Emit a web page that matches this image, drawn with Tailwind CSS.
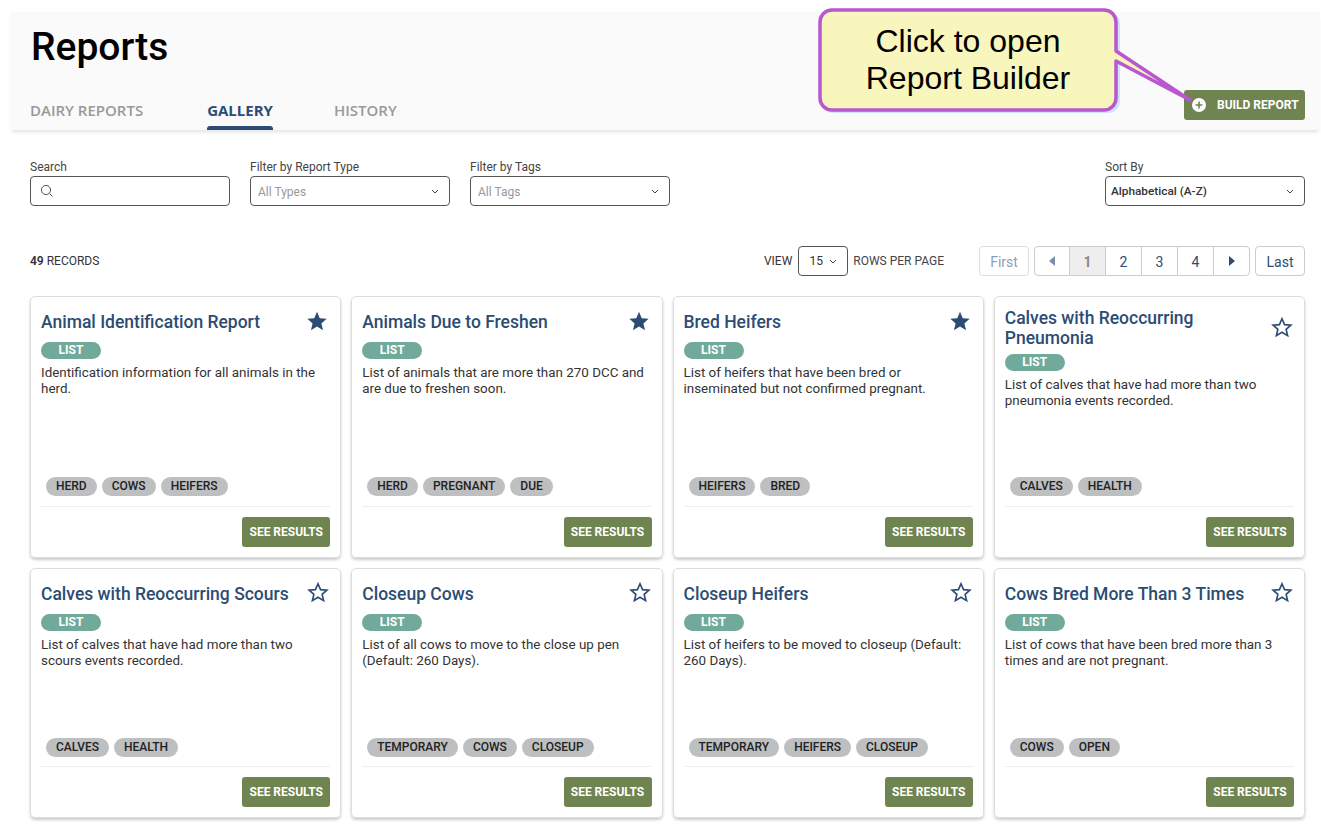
<!DOCTYPE html>
<html lang="en"><head><meta charset="utf-8"><title>Reports</title>
<script src="https://cdn.jsdelivr.net/npm/@tailwindcss/browser@4"></script></head>
<body class="bg-white font-['Roboto',sans-serif] text-[#333] relative overflow-hidden h-[828px]">
<header class="ml-[10px] mr-[1px] mt-[12px] h-[118px] bg-[#fafafa] shadow-[0_4px_4px_-2px_rgba(0,0,0,0.12)] flex flex-col justify-between relative">
  <h1 class="ml-[21px] mt-[12px] text-[39px] leading-[46px] font-medium text-black">Reports</h1>
  <div class="flex justify-between items-end pl-[20px] pr-[15px]">
    <nav class="flex font-['Open_Sans',sans-serif] font-semibold text-[15px] leading-[20px]">
      <span class="text-[#999] h-[30px]">DAIRY REPORTS</span>
      <span class="ml-[64px] text-[#2c4c74] h-[30px] font-bold flex flex-col justify-between">GALLERY<i class="block h-[4px] bg-[#2c4c74] rounded-t-[3px]"></i></span>
      <span class="ml-[61px] text-[#999] h-[30px]">HISTORY</span>
    </nav>
    <button class="mb-[10px] w-[121px] h-[30px] rounded-[3px] bg-[#6f8450] text-white text-[12px] font-bold flex items-center pl-[8px] gap-[11px]">
      <svg class="w-[14px] h-[14px]" viewBox="0 0 14 14"><circle cx="7" cy="7" r="7" fill="#fff"/><path d="M7 3.500v7M3.500 7h7" stroke="#6f8450" stroke-width="1.600"/></svg>BUILD REPORT</button>
  </div>
</header>
<section class="pl-[30px] pr-[16px] pt-[30px] flex justify-between">
  <div class="flex gap-[20px]">
    <label class="block w-[200px] text-[12px] leading-[14px] text-[#444]">Search
      <span class="mt-[2px] h-[30px] border border-[#555] rounded-[4px] flex items-center pl-[9px]"><svg class="w-[14px] h-[14px]" viewBox="0 0 14 14" fill="none" stroke="#555"><circle cx="6" cy="6" r="4.600"/><path d="M9.500 9.500l3 3"/></svg></span></label>
    <label class="block w-[200px] text-[12px] leading-[14px] text-[#444]">Filter by Report Type
      <span class="mt-[2px] h-[30px] border border-[#555] rounded-[4px] flex items-center justify-between pt-[2px] pl-[7px] pr-[10px] text-[#999]">All Types<svg class="w-[8px] h-[5px] -mt-[2px]" viewBox="0 0 8 5" fill="none" stroke="#444"><path d="M1 1l3 3 3-3"/></svg></span></label>
    <label class="block w-[200px] text-[12px] leading-[14px] text-[#444]">Filter by Tags
      <span class="mt-[2px] h-[30px] border border-[#555] rounded-[4px] flex items-center justify-between pt-[2px] pl-[7px] pr-[10px] text-[#999]">All Tags<svg class="w-[8px] h-[5px] -mt-[2px]" viewBox="0 0 8 5" fill="none" stroke="#444"><path d="M1 1l3 3 3-3"/></svg></span></label>
  </div>
  <label class="block w-[200px] text-[12px] leading-[14px] text-[#444]">Sort By
    <span class="mt-[2px] h-[30px] border border-[#555] rounded-[4px] flex items-center justify-between pl-[5px] pr-[10px] text-[#333] font-medium text-[11.800px]">Alphabetical (A-Z)<svg class="w-[8px] h-[5px]" viewBox="0 0 8 5" fill="none" stroke="#444"><path d="M1 1l3 3 3-3"/></svg></span></label>
</section>
<section class="pl-[30px] pr-[16px] mt-[39px] h-[32px] flex items-center text-[12px] text-[#333]">
  <span class="-mt-[1px]"><b class="font-semibold">49</b> RECORDS</span>
  <div class="ml-auto flex items-center">
    <span>VIEW</span>
    <span class="ml-[6px] w-[50px] h-[30px] border border-[#555] rounded-[4px] flex items-center justify-center gap-[6px]">15<svg class="w-[8px] h-[5px]" viewBox="0 0 8 5" fill="none" stroke="#444"><path d="M1 1l3 3 3-3"/></svg></span>
    <span class="ml-[5px] text-[#444]">ROWS PER PAGE</span>
    <div class="ml-[35px] flex h-[30px] text-[14px] text-[#2c4c74]">
      <span class="w-[50px] border border-[#ddd] rounded-[4px] pt-[2px] flex items-center justify-center text-[#8ba0b8]">First</span>
      <div class="ml-[5px] flex border border-[#ccc] rounded-[4px] divide-x divide-[#ccc]">
        <span class="w-[35px] flex items-center justify-center"><svg class="w-[6px] h-[10px]" viewBox="0 0 6 10"><path d="M6 0v10L0 5z" fill="#7b90a8"/></svg></span>
        <span class="w-[36px] bg-[#eee] text-[#888] font-bold pt-[2px] flex items-center justify-center">1</span>
        <span class="w-[36px] pt-[2px] flex items-center justify-center">2</span>
        <span class="w-[36px] pt-[2px] flex items-center justify-center">3</span>
        <span class="w-[36px] pt-[2px] flex items-center justify-center">4</span>
        <span class="w-[35px] flex items-center justify-center"><svg class="w-[6px] h-[10px]" viewBox="0 0 6 10"><path d="M0 0v10l6-5z" fill="#2c4c74"/></svg></span>
      </div>
      <span class="ml-[5px] w-[50px] border border-[#ccc] rounded-[4px] pt-[2px] flex items-center justify-center">Last</span>
    </div>
  </div>
</section>
<main class="pl-[30px] pr-[16px] mt-[19px] grid grid-cols-4 gap-x-[10px] gap-y-[10px]">
  <article class="border border-[#ddd] rounded-[5px] shadow-[0_2px_3px_rgba(0,0,0,0.2)] px-[10px] pt-[11px] pb-[10px] flex flex-col">
    <div class="flex justify-between items-center min-h-[28px]"><h2 class="text-[17.500px] leading-[20px] font-medium text-[#2c4c74]">Animal Identification Report</h2><svg class="w-[22px] h-[22px] shrink-0 mr-[2px] -mt-[3px]" viewBox="0 0 24 24"><path d="M12 2l3 7 7.500.6-5.700 5 1.800 7.400L12 18l-6.600 4 1.800-7.400-5.700-5L9 9z" fill="#2c4c74"/></svg></div>
    <span class="mt-[6px] w-[60px] h-[17px] rounded-full bg-[#71a99a] text-white text-[12px] leading-[17px] font-bold text-center">LIST</span>
    <p class="mt-[6px] text-[13.400px] leading-[16px] flex-1 min-h-[100px]">Identification information for all animals in the herd.</p>
    <div class="flex gap-[5px] pl-[5px] pb-[10px] border-b border-[#eee]"><span class="px-[10px] h-[19px] rounded-full bg-[#bdbfc1] text-[12px] leading-[19px] font-medium text-[#222]">HERD</span><span class="px-[10px] h-[19px] rounded-full bg-[#bdbfc1] text-[12px] leading-[19px] font-medium text-[#222]">COWS</span><span class="px-[10px] h-[19px] rounded-full bg-[#bdbfc1] text-[12px] leading-[19px] font-medium text-[#222]">HEIFERS</span></div>
    <button class="self-end mt-[10px] w-[88px] h-[30px] rounded-[3px] bg-[#6f8450] text-white text-[12px] font-bold">SEE RESULTS</button>
  </article>
  <article class="border border-[#ddd] rounded-[5px] shadow-[0_2px_3px_rgba(0,0,0,0.2)] px-[10px] pt-[11px] pb-[10px] flex flex-col">
    <div class="flex justify-between items-center min-h-[28px]"><h2 class="text-[17.500px] leading-[20px] font-medium text-[#2c4c74]">Animals Due to Freshen</h2><svg class="w-[22px] h-[22px] shrink-0 mr-[2px] -mt-[3px]" viewBox="0 0 24 24"><path d="M12 2l3 7 7.500.6-5.700 5 1.800 7.400L12 18l-6.600 4 1.800-7.400-5.700-5L9 9z" fill="#2c4c74"/></svg></div>
    <span class="mt-[6px] w-[60px] h-[17px] rounded-full bg-[#71a99a] text-white text-[12px] leading-[17px] font-bold text-center">LIST</span>
    <p class="mt-[6px] text-[13.400px] leading-[16px] flex-1 min-h-[100px]">List of animals that are more than 270 DCC and are due to freshen soon.</p>
    <div class="flex gap-[5px] pl-[5px] pb-[10px] border-b border-[#eee]"><span class="px-[10px] h-[19px] rounded-full bg-[#bdbfc1] text-[12px] leading-[19px] font-medium text-[#222]">HERD</span><span class="px-[10px] h-[19px] rounded-full bg-[#bdbfc1] text-[12px] leading-[19px] font-medium text-[#222]">PREGNANT</span><span class="px-[10px] h-[19px] rounded-full bg-[#bdbfc1] text-[12px] leading-[19px] font-medium text-[#222]">DUE</span></div>
    <button class="self-end mt-[10px] w-[88px] h-[30px] rounded-[3px] bg-[#6f8450] text-white text-[12px] font-bold">SEE RESULTS</button>
  </article>
  <article class="border border-[#ddd] rounded-[5px] shadow-[0_2px_3px_rgba(0,0,0,0.2)] px-[10px] pt-[11px] pb-[10px] flex flex-col">
    <div class="flex justify-between items-center min-h-[28px]"><h2 class="text-[17.500px] leading-[20px] font-medium text-[#2c4c74]">Bred Heifers</h2><svg class="w-[22px] h-[22px] shrink-0 mr-[2px] -mt-[3px]" viewBox="0 0 24 24"><path d="M12 2l3 7 7.500.6-5.700 5 1.800 7.400L12 18l-6.600 4 1.800-7.400-5.700-5L9 9z" fill="#2c4c74"/></svg></div>
    <span class="mt-[6px] w-[60px] h-[17px] rounded-full bg-[#71a99a] text-white text-[12px] leading-[17px] font-bold text-center">LIST</span>
    <p class="mt-[6px] text-[13.400px] leading-[16px] flex-1 min-h-[100px]">List of heifers that have been bred or inseminated but not confirmed pregnant.</p>
    <div class="flex gap-[5px] pl-[5px] pb-[10px] border-b border-[#eee]"><span class="px-[10px] h-[19px] rounded-full bg-[#bdbfc1] text-[12px] leading-[19px] font-medium text-[#222]">HEIFERS</span><span class="px-[10px] h-[19px] rounded-full bg-[#bdbfc1] text-[12px] leading-[19px] font-medium text-[#222]">BRED</span></div>
    <button class="self-end mt-[10px] w-[88px] h-[30px] rounded-[3px] bg-[#6f8450] text-white text-[12px] font-bold">SEE RESULTS</button>
  </article>
  <article class="border border-[#ddd] rounded-[5px] shadow-[0_2px_3px_rgba(0,0,0,0.2)] px-[10px] pt-[11px] pb-[10px] flex flex-col">
    <div class="flex justify-between items-center min-h-[28px]"><h2 class="text-[17.500px] leading-[20px] font-medium text-[#2c4c74]">Calves with Reoccurring Pneumonia</h2><svg class="w-[22px] h-[22px] shrink-0 mr-[1px] -mt-[2px]" viewBox="0 0 24 24"><path d="M12 3l2.800 6.400 6.900.6-5.200 4.600 1.600 6.800L12 17.800l-6.100 3.600 1.600-6.800L2.300 10l6.900-.6z" fill="none" stroke="#2c4c74" stroke-width="1.800"/></svg></div>
    <span class="mt-[6px] w-[60px] h-[17px] rounded-full bg-[#71a99a] text-white text-[12px] leading-[17px] font-bold text-center">LIST</span>
    <p class="mt-[6px] text-[13.400px] leading-[16px] flex-1 min-h-[100px]">List of calves that have had more than two pneumonia events recorded.</p>
    <div class="flex gap-[5px] pl-[5px] pb-[10px] border-b border-[#eee]"><span class="px-[10px] h-[19px] rounded-full bg-[#bdbfc1] text-[12px] leading-[19px] font-medium text-[#222]">CALVES</span><span class="px-[10px] h-[19px] rounded-full bg-[#bdbfc1] text-[12px] leading-[19px] font-medium text-[#222]">HEALTH</span></div>
    <button class="self-end mt-[10px] w-[88px] h-[30px] rounded-[3px] bg-[#6f8450] text-white text-[12px] font-bold">SEE RESULTS</button>
  </article>
  <article class="border border-[#ddd] rounded-[5px] shadow-[0_2px_3px_rgba(0,0,0,0.2)] px-[10px] pt-[11px] pb-[10px] flex flex-col">
    <div class="flex justify-between items-center min-h-[28px]"><h2 class="text-[17.500px] leading-[20px] font-medium text-[#2c4c74]">Calves with Reoccurring Scours</h2><svg class="w-[22px] h-[22px] shrink-0 mr-[1px] -mt-[4px]" viewBox="0 0 24 24"><path d="M12 3l2.800 6.400 6.900.6-5.200 4.600 1.600 6.800L12 17.800l-6.100 3.600 1.600-6.800L2.300 10l6.900-.6z" fill="none" stroke="#2c4c74" stroke-width="1.800"/></svg></div>
    <span class="mt-[6px] w-[60px] h-[17px] rounded-full bg-[#71a99a] text-white text-[12px] leading-[17px] font-bold text-center">LIST</span>
    <p class="mt-[6px] text-[13.400px] leading-[16px] flex-1 min-h-[101px]">List of calves that have had more than two scours events recorded.</p>
    <div class="flex gap-[5px] pl-[5px] pb-[9px] border-b border-[#eee]"><span class="px-[10px] h-[19px] rounded-full bg-[#bdbfc1] text-[12px] leading-[19px] font-medium text-[#222]">CALVES</span><span class="px-[10px] h-[19px] rounded-full bg-[#bdbfc1] text-[12px] leading-[19px] font-medium text-[#222]">HEALTH</span></div>
    <button class="self-end mt-[10px] w-[88px] h-[30px] rounded-[3px] bg-[#6f8450] text-white text-[12px] font-bold">SEE RESULTS</button>
  </article>
  <article class="border border-[#ddd] rounded-[5px] shadow-[0_2px_3px_rgba(0,0,0,0.2)] px-[10px] pt-[11px] pb-[10px] flex flex-col">
    <div class="flex justify-between items-center min-h-[28px]"><h2 class="text-[17.500px] leading-[20px] font-medium text-[#2c4c74]">Closeup Cows</h2><svg class="w-[22px] h-[22px] shrink-0 mr-[1px] -mt-[4px]" viewBox="0 0 24 24"><path d="M12 3l2.800 6.400 6.900.6-5.200 4.600 1.600 6.800L12 17.800l-6.100 3.600 1.600-6.800L2.300 10l6.900-.6z" fill="none" stroke="#2c4c74" stroke-width="1.800"/></svg></div>
    <span class="mt-[6px] w-[60px] h-[17px] rounded-full bg-[#71a99a] text-white text-[12px] leading-[17px] font-bold text-center">LIST</span>
    <p class="mt-[6px] text-[13.400px] leading-[16px] flex-1 min-h-[101px]">List of all cows to move to the close up pen (Default: 260 Days).</p>
    <div class="flex gap-[5px] pl-[5px] pb-[9px] border-b border-[#eee]"><span class="px-[10px] h-[19px] rounded-full bg-[#bdbfc1] text-[12px] leading-[19px] font-medium text-[#222]">TEMPORARY</span><span class="px-[10px] h-[19px] rounded-full bg-[#bdbfc1] text-[12px] leading-[19px] font-medium text-[#222]">COWS</span><span class="px-[10px] h-[19px] rounded-full bg-[#bdbfc1] text-[12px] leading-[19px] font-medium text-[#222]">CLOSEUP</span></div>
    <button class="self-end mt-[10px] w-[88px] h-[30px] rounded-[3px] bg-[#6f8450] text-white text-[12px] font-bold">SEE RESULTS</button>
  </article>
  <article class="border border-[#ddd] rounded-[5px] shadow-[0_2px_3px_rgba(0,0,0,0.2)] px-[10px] pt-[11px] pb-[10px] flex flex-col">
    <div class="flex justify-between items-center min-h-[28px]"><h2 class="text-[17.500px] leading-[20px] font-medium text-[#2c4c74]">Closeup Heifers</h2><svg class="w-[22px] h-[22px] shrink-0 mr-[1px] -mt-[4px]" viewBox="0 0 24 24"><path d="M12 3l2.800 6.400 6.900.6-5.200 4.600 1.600 6.800L12 17.800l-6.100 3.600 1.600-6.800L2.300 10l6.900-.6z" fill="none" stroke="#2c4c74" stroke-width="1.800"/></svg></div>
    <span class="mt-[6px] w-[60px] h-[17px] rounded-full bg-[#71a99a] text-white text-[12px] leading-[17px] font-bold text-center">LIST</span>
    <p class="mt-[6px] text-[13.400px] leading-[16px] flex-1 min-h-[101px]">List of heifers to be moved to closeup (Default: 260 Days).</p>
    <div class="flex gap-[5px] pl-[5px] pb-[9px] border-b border-[#eee]"><span class="px-[10px] h-[19px] rounded-full bg-[#bdbfc1] text-[12px] leading-[19px] font-medium text-[#222]">TEMPORARY</span><span class="px-[10px] h-[19px] rounded-full bg-[#bdbfc1] text-[12px] leading-[19px] font-medium text-[#222]">HEIFERS</span><span class="px-[10px] h-[19px] rounded-full bg-[#bdbfc1] text-[12px] leading-[19px] font-medium text-[#222]">CLOSEUP</span></div>
    <button class="self-end mt-[10px] w-[88px] h-[30px] rounded-[3px] bg-[#6f8450] text-white text-[12px] font-bold">SEE RESULTS</button>
  </article>
  <article class="border border-[#ddd] rounded-[5px] shadow-[0_2px_3px_rgba(0,0,0,0.2)] px-[10px] pt-[11px] pb-[10px] flex flex-col">
    <div class="flex justify-between items-center min-h-[28px]"><h2 class="text-[17.500px] leading-[20px] font-medium text-[#2c4c74]">Cows Bred More Than 3 Times</h2><svg class="w-[22px] h-[22px] shrink-0 mr-[1px] -mt-[4px]" viewBox="0 0 24 24"><path d="M12 3l2.800 6.400 6.900.6-5.200 4.600 1.600 6.800L12 17.800l-6.100 3.600 1.600-6.800L2.300 10l6.900-.6z" fill="none" stroke="#2c4c74" stroke-width="1.800"/></svg></div>
    <span class="mt-[6px] w-[60px] h-[17px] rounded-full bg-[#71a99a] text-white text-[12px] leading-[17px] font-bold text-center">LIST</span>
    <p class="mt-[6px] text-[13.400px] leading-[16px] flex-1 min-h-[101px]">List of cows that have been bred more than 3 times and are not pregnant.</p>
    <div class="flex gap-[5px] pl-[5px] pb-[9px] border-b border-[#eee]"><span class="px-[10px] h-[19px] rounded-full bg-[#bdbfc1] text-[12px] leading-[19px] font-medium text-[#222]">COWS</span><span class="px-[10px] h-[19px] rounded-full bg-[#bdbfc1] text-[12px] leading-[19px] font-medium text-[#222]">OPEN</span></div>
    <button class="self-end mt-[10px] w-[88px] h-[30px] rounded-[3px] bg-[#6f8450] text-white text-[12px] font-bold">SEE RESULTS</button>
  </article>
</main>
<svg class="absolute left-[810px] top-0 w-[390px] h-[120px]" viewBox="810 0 390 120" fill="none">
  <rect x="821" y="12" width="299" height="101" rx="12" fill="#cfe3fb"/>
  <path d="M832 10H1104a12 12 0 0 1 12 12V51L1190 100 1116 61V98a12 12 0 0 1-12 12H832a12 12 0 0 1-12-12V22a12 12 0 0 1 12-12z" fill="#f8f5bd" stroke="#b857cf" stroke-width="3.500" stroke-linejoin="round"/>
</svg>
<div class="absolute left-[819px] top-[23px] w-[298px] text-center font-['Liberation_Sans',sans-serif] text-[32px] leading-[37px] text-black">Click to open<br>Report Builder</div>
</body></html>
